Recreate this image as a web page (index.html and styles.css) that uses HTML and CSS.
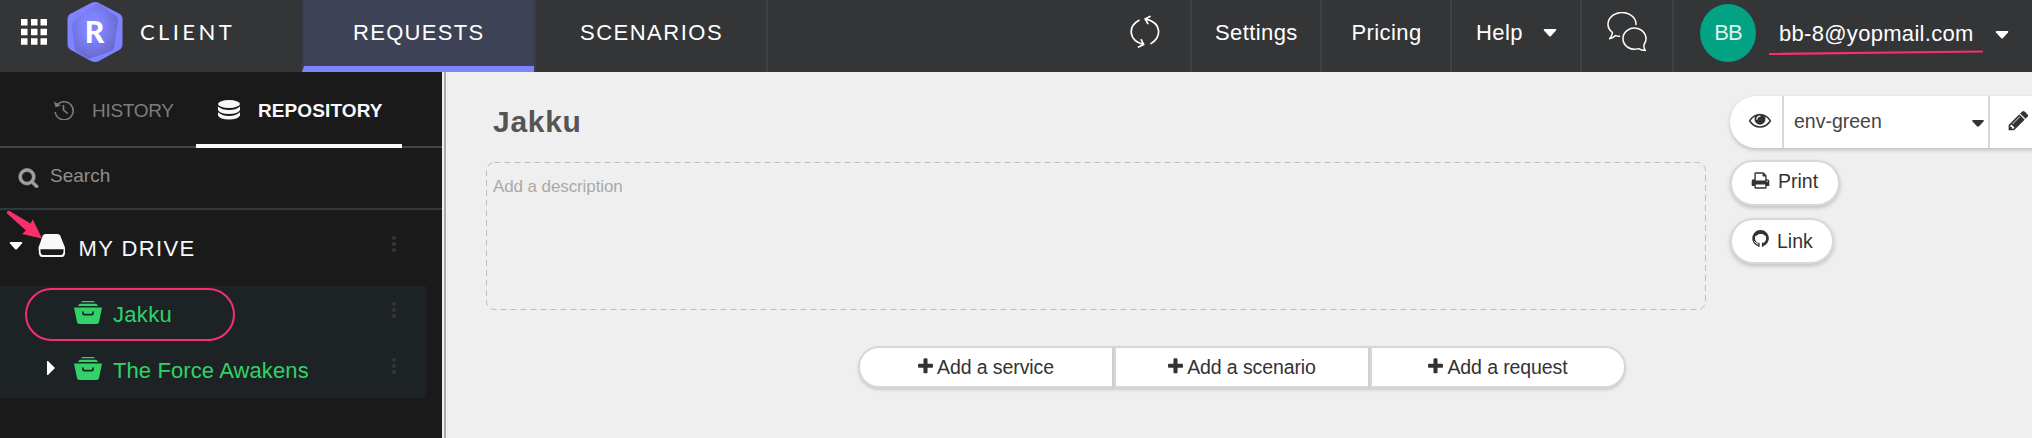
FILE: index.html
```html
<!DOCTYPE html>
<html lang="en">
<head>
<meta charset="utf-8">
<title>Client</title>
<link rel="stylesheet" href="styles.css">
</head>
<body>
<header class="topbar">
  <div class="brand">
    <svg class="apps" width="26" height="26" viewBox="0 0 26 26" fill="#fff"><path d="M0 0h6.500v6.500H0zM10 0h6.500v6.500H10zM19.500 0H26v6.500h-6.500zM0 9.700h6.500v6.500H0zM10 9.700h6.500v6.500H10zM19.500 9.700H26v6.500h-6.500zM0 19.300h6.500v6.500H0zM10 19.300h6.500v6.500H10zM19.500 19.300H26v6.500h-6.500z"/></svg>
    <svg class="logo" width="56" height="62" viewBox="0 0 56 62">
      <defs><radialGradient id="gem" cx=".45" cy=".42" r=".62"><stop offset=".35" stop-color="#8083ff"/><stop offset="1" stop-color="#6669c6"/></radialGradient></defs>
      <path d="M24 2Q28 0 32 2L52 12.500Q55.500 14.500 55.500 18V43Q55.500 47 52 49L32 60Q28 62 24 60L4 49Q.5 47 .5 43V18Q.5 14.500 4 12.500Z" fill="#8083ff"/>
      <path d="M28 4Q31 1.500 34 4L49 15Q51.500 17 51 20L47.500 45Q47 49 43.500 50.500L26 56.500Q21 58.500 18 56L9 50Q8 49 7.500 45L5 25Q4.500 22 7 20Z" fill="url(#gem)"/>
      <text x="27.500" y="41.500" text-anchor="middle" class="logo-letter">R</text>
    </svg>
    <span class="product">CLIENT</span>
  </div>
  <nav class="tabs">
    <a class="tab tab-active">REQUESTS</a>
    <a class="tab tab-second">SCENARIOS</a>
  </nav>
  <div class="tools">
    <a class="tool tool-sync">
      <svg width="30" height="34" viewBox="0 0 30 34" fill="none" stroke="#fff" stroke-width="1.700" stroke-linecap="round" stroke-linejoin="round"><path d="M9 5.300C-2 11.500-2 25 13.500 29.500M8.500 32L13.700 29.600L11.300 24.800M21 28.600C32 21.500 31.500 8 16 4.200M20 1.500L15 3.900L17.800 8.500"/></svg>
    </a>
    <a class="tool tool-settings">Settings</a>
    <a class="tool tool-pricing">Pricing</a>
    <a class="tool tool-help">Help <svg class="caret" width="14" height="8" viewBox="0 0 14 8"><path d="M1.500 0H12.500Q14 .3 13 1.500L8 7Q7 8 6 7L1 1.500Q0 .3 1.500 0Z" fill="#fff"/></svg></a>
    <a class="tool tool-chat">
      <svg width="40" height="40" viewBox="0 0 40 40" fill="none" stroke="#fff" stroke-width="1.500" stroke-linejoin="round" stroke-linecap="round"><path d="M29 12.500A14 11.500 0 1 0 5.500 20.500Q5 24 2.600 26.700Q6.500 26 8.500 23.600Q10.500 24.300 12.500 24.200"/><path d="M37 32.600A11.500 10.600 0 1 0 31.500 36.600Q34.500 38.500 38.300 38.500Q36.500 36.500 37 32.600"/></svg>
    </a>
    <div class="account">
      <span class="avatar">BB</span>
      <span class="email">bb-8@yopmail.com<svg class="underline" width="216" height="8" viewBox="0 0 216 8"><path d="M2 5L214 2.500" stroke="#f92f6c" stroke-width="2.200" stroke-linecap="round"/></svg></span>
      <svg class="caret" width="14" height="8" viewBox="0 0 14 8"><path d="M1.500 0H12.500Q14 .3 13 1.500L8 7Q7 8 6 7L1 1.500Q0 .3 1.500 0Z" fill="#fff"/></svg>
    </div>
  </div>
</header>
<div class="body">
  <aside class="sidebar">
    <div class="side-tabs">
      <a class="side-tab side-history">
        <svg width="20" height="20" viewBox="0 0 20 20" fill="none" stroke="#7d7d7d" stroke-width="1.600"><path d="M3 5.300A9 9 0 1 1 1.200 12M9.500 5V10L13.800 13.500"/><path d="M0 1.500L1.500 7.300L7 5.500Z" fill="#7d7d7d" stroke="none"/></svg>
        <span>HISTORY</span>
      </a>
      <a class="side-tab side-repo">
        <svg width="22" height="20" viewBox="0 0 22 20" fill="#f7f9fa"><ellipse cx="11" cy="4" rx="11" ry="4"/><path d="M0 6.500Q4 10 11 10T22 6.500V10Q20 14 11 14T0 10ZM0 12.300Q4 16 11 16T22 12.300V15.500Q20 19.500 11 19.500T0 15.500Z"/></svg>
        <span>REPOSITORY</span>
      </a>
    </div>
    <div class="search">
      <svg width="21" height="21" viewBox="0 0 1792 1792" fill="#a0a0a0" stroke="#a0a0a0" stroke-width="50"><path d="M1216 832q0-185-131.500-316.500t-316.500-131.500-316.500 131.500-131.500 316.500 131.500 316.500 316.500 131.500 316.500-131.500 131.500-316.500zm512 832q0 52-38 90t-90 38q-54 0-90-38l-343-342q-179 124-399 124-143 0-273.500-55.500t-225-150-150-225-55.500-273.500 55.500-273.500 150-225 225-150 273.500-55.500 273.500 55.500 225 150 150 225 55.500 273.500q0 220-124 399l343 343q37 37 37 90z"/></svg>
      <span>Search</span>
    </div>
    <div class="drive">
      <svg class="caret" width="14" height="8" viewBox="0 0 14 8"><path d="M1.500 0H12.500Q14 .3 13 1.500L8 7Q7 8 6 7L1 1.500Q0 .3 1.500 0Z" fill="#fff"/></svg>
      <svg class="disk" width="28" height="24" viewBox="0 0 28 24"><path d="M7.500 0H19.500Q21.500 0 22.200 1.500L27 13.500V19.500Q26.500 23 24 23H4Q1.500 23 1 19.500L0.500 13.500L4.800 1.500Q5.500 0 7.500 0Z" fill="#f7f9fa"/><path d="M2.500 15.200H25.500V18Q25 21 23.500 21H4.500Q3 21 2.500 18Z" fill="#1a1a1a"/></svg>
      <span class="drive-name">MY DRIVE</span>
      <svg class="dots" width="4" height="16" viewBox="0 0 4 16" fill="#343637"><circle cx="2" cy="2" r="2"/><circle cx="2" cy="8" r="2"/><circle cx="2" cy="14" r="2"/></svg>
    </div>
    <div class="tree">
      <div class="node node-selected">
        <svg class="box" width="28" height="24" viewBox="0 0 28 24"><path d="M8 0H20L21 1.300H7ZM5.500 2.700H22.500L24 5H4ZM0 6.500H28L25 21Q24.600 23 22.500 23H5.500Q3.400 23 3 21Z" fill="#2fd368"/><path d="M9 10.500V12.500Q9 13.700 10.200 13.700H17.800Q19 13.700 19 12.500V10.500" fill="none" stroke="#1d2325" stroke-width="1.800"/></svg>
        <span>Jakku</span>
        <svg class="dots" width="4" height="16" viewBox="0 0 4 16" fill="#343637"><circle cx="2" cy="2" r="2"/><circle cx="2" cy="8" r="2"/><circle cx="2" cy="14" r="2"/></svg>
      </div>
      <div class="node">
        <svg class="expander" width="8" height="14" viewBox="0 0 8 14"><path d="M0 0H1L7.500 6.500V7.500L1 14H0Z" fill="#fff"/></svg>
        <svg class="box" width="28" height="24" viewBox="0 0 28 24"><path d="M8 0H20L21 1.300H7ZM5.500 2.700H22.500L24 5H4ZM0 6.500H28L25 21Q24.600 23 22.500 23H5.500Q3.400 23 3 21Z" fill="#2fd368"/><path d="M9 10.500V12.500Q9 13.700 10.200 13.700H17.800Q19 13.700 19 12.500V10.500" fill="none" stroke="#1d2325" stroke-width="1.800"/></svg>
        <span class="wide-name">The Force Awakens</span>
        <svg class="dots" width="4" height="16" viewBox="0 0 4 16" fill="#343637"><circle cx="2" cy="2" r="2"/><circle cx="2" cy="8" r="2"/><circle cx="2" cy="14" r="2"/></svg>
      </div>
      <i class="ring"></i>
    </div>
    <svg class="pointer" width="42" height="36" viewBox="0 0 42 36"><path d="M4 4Q5 2 7 3.200L27.500 15.500L29.800 11.500L39 30.500L19 26L23 22.500L4 5.500Z" fill="#f92f6c"/></svg>
  </aside>
  <main class="main">
    <section class="content">
      <h1 class="title">Jakku</h1>
      <div class="description">
        <svg class="outline" width="1220" height="148"><rect x=".5" y=".5" width="1219" height="147" rx="8" fill="none" stroke="#bdbdbd" stroke-dasharray="6 4"/></svg>
        <span>Add a description</span>
      </div>
      <div class="actions">
        <button class="action"><svg width="19" height="19" viewBox="0 0 1792 1792"><use href="#plus"/></svg>Add a service</button>
        <button class="action"><svg width="19" height="19" viewBox="0 0 1792 1792"><use href="#plus"/></svg>Add a scenario</button>
        <button class="action"><svg width="19" height="19" viewBox="0 0 1792 1792"><use href="#plus"/></svg>Add a request</button>
      </div>
    </section>
    <section class="options">
      <div class="env">
        <span class="env-eye"><svg width="22" height="22" viewBox="0 0 1792 1792" fill="#333"><path d="M1664 960q-152-236-381-353 61 104 61 225 0 185-131.500 316.500t-316.500 131.500-316.500-131.500-131.500-316.500q0-121 61-225-229 117-381 353 133 205 333.500 326.500t434.500 121.500 434.500-121.500 333.500-326.500zm-720-384q0-20-14-34t-34-14q-125 0-214.500 89.500t-89.500 214.500q0 20 14 34t34 14 34-14 14-34q0-86 61-147t147-61q20 0 34-14t14-34zm848 384q0 34-20 69-140 230-376.500 368.500t-499.500 138.500-499.500-139-376.500-368q-20-35-20-69t20-69q140-229 376.500-368t499.500-139 499.500 139 376.500 368q20 35 20 69z"/></svg></span>
        <span class="env-select">env-green<svg width="12" height="7" viewBox="0 0 12 7"><path d="M1 0H11Q12.300.5 11.500 1.500L7 6.300Q6 7.200 5 6.300L.5 1.500Q-.3.5 1 0Z" fill="#333"/></svg></span>
        <span class="env-edit"><svg width="23" height="23" viewBox="0 0 1792 1792" fill="#333"><path d="M491 1536l91-91-235-235-91 91v107h128v128h107zm523-928q0-22-22-22-10 0-17 7l-542 542q-7 7-7 17 0 22 22 22 10 0 17-7l542-542q7-7 7-17zm-54-192l416 416-832 832h-416v-416zm683 96q0 53-37 90l-166 166-416-416 166-165q36-38 90-38 53 0 91 38l235 234q37 39 37 91z"/></svg></span>
      </div>
      <button class="pill pill-print"><svg width="19" height="19" viewBox="0 0 1792 1792" fill="#333"><path d="M448 1536h896v-256h-896v256zm0-640h896v-384h-160q-40 0-68-28t-28-68v-160h-640v640zm1152 64q0-26-19-45t-45-19-45 19-19 45 19 45 45 19 45-19 19-45zm128 0v416q0 13-9.500 22.500t-22.500 9.500h-224v160q0 40-28 68t-68 28h-960q-40 0-68-28t-28-68v-160h-224q-13 0-22.500-9.500t-9.500-22.500v-416q0-79 56.500-135.500t135.500-56.500h64v-544q0-40 28-68t68-28h672q40 0 88 20t76 48l152 152q28 28 48 76t20 88v256h64q79 0 135.500 56.500t56.500 135.500z"/></svg>Print</button>
      <button class="pill pill-link"><svg width="18" height="18" viewBox="0 0 18 18" fill="none" stroke="#333"><path d="M6.300 14.800A6.900 6.900 0 1 1 10.800 14.800" stroke-width="2.700"/><path d="M3.500 3L4 6L7 4H10.500L13.500 6L14 3L9 1Z" fill="#333" stroke="none"/><path d="M6.800 12.800V16.800M10.700 12.800V16.800" stroke-width="1.600"/><path d="M2.200 11.500Q3.300 12 3.900 13Q4.700 14.300 6.600 14" stroke="#fff" stroke-width=".9"/></svg><span>Link</span></button>
    </section>
  </main>
</div>
<svg class="defs" width="0" height="0"><defs><path id="plus" fill="#333" d="M1600 736v192q0 40-28 68t-68 28h-416v416q0 40-28 68t-68 28h-192q-40 0-68-28t-28-68v-416h-416q-40 0-68-28t-28-68v-192q0-40 28-68t68-28h416v-416q0-40 28-68t68-28h192q40 0 68 28t28 68v416h416q40 0 68 28t28 68z"/></defs></svg>
</body>
</html>
```
FILE: styles.css
```css
* { box-sizing: border-box; }
html, body { margin: 0; height: 438px; overflow: hidden; }
body { width: 2032px; background: #efefef; font-family: "Liberation Sans", Arial, sans-serif; color: #333; }
svg { display: block; flex: none; }
span { white-space: nowrap; }
.defs { position: absolute; }

/* top bar */
.topbar { display: flex; height: 72px; background: #343537; color: #fff; font-size: 22px; line-height: 26px; }
.brand { width: 302px; display: flex; align-items: flex-start; }
.apps { margin: 19px 20px 0 21px; }
.logo { margin: 1px 17px 0 0; }
.logo-letter { font: 900 30px Lato, sans-serif; fill: #fff; }
.product { font-family: Lato, sans-serif; font-size: 22px; letter-spacing: 3.4px; margin-top: 19px; }
.tabs { display: flex; }
.tab { padding-top: 20px; letter-spacing: 1.3px; }
.tab-active { width: 232px; padding-left: 49px; background: #3e4256; border-left: 2px solid #3a3e4c; border-bottom: 6px solid #8083ff; }
.tab-second { width: 234px; padding-left: 44px; letter-spacing: 1.5px; border-left: 2px solid #3a3d45; border-right: 2px solid #3b4349; }
.tools { display: flex; margin-left: auto; width: 902px; }
.tool { display: flex; padding-top: 20px; border-right: 2px solid #3b4349; letter-spacing: .4px; flex: none; }
.tool-sync { width: 62px; padding-top: 15px; }
.tool-settings { width: 130px; padding-left: 23px; }
.tool-pricing { width: 130px; padding-left: 29.500px; }
.tool-help { width: 130px; padding-left: 24px; }
.tool-help .caret { margin: 9px 0 0 20px; }
.tool-chat { width: 92px; padding: 12px 0 0 25px; }
.account { display: flex; padding-left: 26px; }
.avatar { width: 56px; height: 58px; margin-top: 4px; border-radius: 50%; background: #02a284; color: #d9f3ee; text-align: center; line-height: 58px; letter-spacing: -1px; }
.email { position: relative; margin: 21px 0 0 23px; letter-spacing: .3px; }
.underline { position: absolute; left: -11px; top: 28px; }
.account .caret { margin: 31px 0 0 21px; }

/* sidebar */
.body { display: flex; height: 366px; }
.sidebar { position: relative; width: 442px; background: #1a1a1a; flex: none; }
.side-tabs { display: flex; height: 76px; border-bottom: 2px solid #444; font-size: 19px; line-height: 22px; }
.side-tab { display: flex; height: 76px; padding-top: 28px; flex: none; }
.side-history { width: 196px; padding-left: 54px; gap: 18px; color: #7d7d7d; letter-spacing: -.3px; }
.side-repo { width: 206px; padding-left: 22px; gap: 18px; color: #f7f9fa; font-weight: bold; letter-spacing: .1px; border-bottom: 4px solid #f7f9fa; }
.search { display: flex; height: 62px; padding: 17px 0 0 18px; gap: 11px; border-bottom: 2px solid #2e383e; color: #8f8f8f; font-size: 19px; line-height: 22px; }
.search svg { margin-top: 2px; }
.drive { display: flex; height: 76px; padding: 24px 0 0 9px; color: #f7f9fa; font-size: 22px; line-height: 26px; }
.drive .caret { margin-top: 8px; }
.disk { margin: 0 0 0 15px; }
.drive-name { margin: 2px 0 0 12.500px; letter-spacing: 1.4px; }
.drive .dots { margin: 2px 46px 0 auto; }
.tree { position: relative; width: 426px; height: 112px; background: #1d2325; }
.node { display: flex; height: 56px; padding: 15px 30px 0 47px; color: #2fd368; font-size: 22px; line-height: 26px; letter-spacing: .3px; }
.node-selected { padding-left: 74px; }
.expander { margin: 4px 19px 0 0; }
.node span { margin: 1px 0 0 11px; }
.node .wide-name { letter-spacing: .1px; }
.node .dots { margin: 1px 0 0 auto; }
.ring { position: absolute; left: 25px; top: 2px; width: 210px; height: 53px; border: 2px solid #f92f6c; border-radius: 27px; }
.pointer { position: absolute; left: 3px; top: 136px; }

/* main area */
.main { flex: 1; display: flex; margin-left: 2px; border-left: 2px solid #aaa; overflow: hidden; }
.content { width: 1284px; padding-left: 40px; flex: none; }
.title { margin: 32px 0 0 7px; height: 58px; font-size: 30px; line-height: 36px; letter-spacing: .7px; color: #555; }
.description { position: relative; width: 1220px; height: 148px; padding: 15px 7px; font-size: 17px; line-height: 20px; color: #aaa; letter-spacing: -.1px; }
.outline { position: absolute; left: 0; top: 0; }
.actions { display: flex; margin: 36px 0 0 372px; }
.action { display: flex; justify-content: center; width: 256px; height: 42px; padding: 8px 2px 0 0; border: 2px solid #d7d7d7; background: #fff; box-shadow: 0 2px 3px rgba(0,0,0,.15); font: 19.500px/22px "Liberation Sans", Arial, sans-serif; letter-spacing: -.1px; color: #333; }
.action svg { margin: 1px 2px 0 0; }
.action:first-child { border-radius: 21px 0 0 21px; }
.action:last-child { border-radius: 0 21px 21px 0; }
.options { padding-top: 24px; flex: none; }
.env { display: flex; width: 330px; height: 52px; border-radius: 26px 0 0 26px; background: #fff; box-shadow: 0 2px 4px rgba(0,0,0,.2); color: #444; font-size: 19.500px; line-height: 22px; }
.env-eye { width: 54px; border-right: 2px solid #d7d7d7; padding: 13px 0 0 19px; }
.env-select { display: flex; width: 206px; border-right: 2px solid #d7d7d7; padding: 14px 4px 0 10px; justify-content: space-between; }
.env-select svg { margin-top: 10px; }
.env-edit { padding: 13px 0 0 17px; }
.pill { display: flex; height: 46px; padding: 8px 0 0 19px; border: 2px solid #d9d9d9; border-radius: 23px; background: #fff; box-shadow: 0 2px 4px rgba(0,0,0,.2); font: 19.500px/22px "Liberation Sans", Arial, sans-serif; color: #333; }
.pill svg { margin-top: 1px; }
.pill-print { width: 110px; margin-top: 12px; gap: 8px; }
.pill-link { width: 104px; margin-top: 12px; gap: 7px; }
.pill-link svg { margin: 2px 0 0 1px; }
.pill-link span { margin-top: 2px; }
```
